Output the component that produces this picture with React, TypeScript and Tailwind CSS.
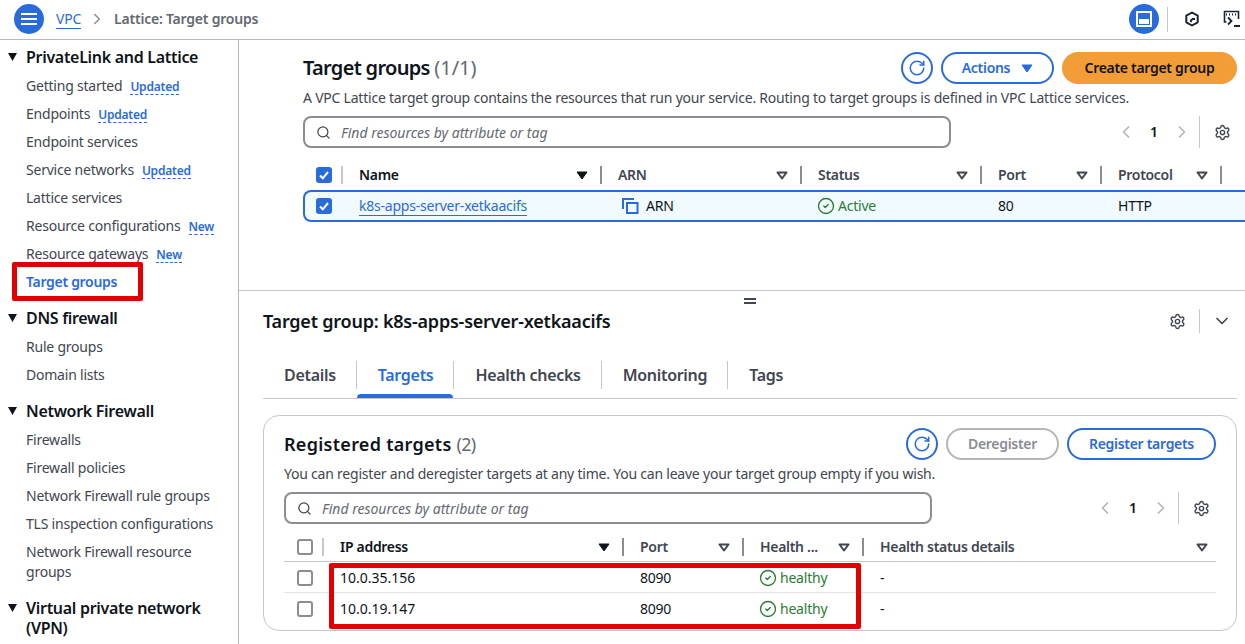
import { ChevronDown, ChevronLeft, ChevronRight, CircleCheck, RotateCw, Search, Settings } from "lucide-react";

const navSections = [
  {
    title: "PrivateLink and Lattice",
    items: [
      { label: "Getting started", badge: "Updated" },
      { label: "Endpoints", badge: "Updated" },
      { label: "Endpoint services" },
      { label: "Service networks", badge: "Updated" },
      { label: "Lattice services" },
      { label: "Resource configurations", badge: "New" },
      { label: "Resource gateways", badge: "New" },
      { label: "Target groups", active: true },
    ],
  },
  { title: "DNS firewall", items: [{ label: "Rule groups" }, { label: "Domain lists" }] },
  {
    title: "Network Firewall",
    items: [
      { label: "Firewalls" },
      { label: "Firewall policies" },
      { label: "Network Firewall rule groups" },
      { label: "TLS inspection configurations" },
      { label: "Network Firewall resource groups" },
    ],
  },
  { title: "Virtual private network (VPN)", items: [] },
];

function SortIcon({ active }: { active?: boolean }) {
  return (
    <svg width="12" height="9" viewBox="0 0 12 9" className="shrink-0">
      {active ? (
        <path d="M1 1h10L6 8z" fill="#0f141a" stroke="#0f141a" strokeWidth="1" strokeLinejoin="round" />
      ) : (
        <path d="M1.5 1.5h9L6 7.5z" fill="none" stroke="#424650" strokeWidth="2" strokeLinejoin="round" />
      )}
    </svg>
  );
}

function Checkbox({ checked }: { checked?: boolean }) {
  if (checked) {
    return (
      <span className="flex h-4 w-4 shrink-0 items-center justify-center rounded-[3px] bg-[#2a6bdc]">
        <svg width="12" height="12" viewBox="0 0 12 12" fill="none" stroke="white" strokeWidth="2">
          <path d="M2 6.5l2.8 2.8L10 3" />
        </svg>
      </span>
    );
  }
  return <span className="block h-4 w-4 shrink-0 rounded-[3px] border-2 border-[#8c8c94] bg-white" />;
}

function HeaderCell({ label, active, last }: { label: string; active?: boolean; last?: boolean }) {
  return (
    <div className={`flex h-[18px] items-center justify-between pl-[16px] ${last ? "pr-[8px]" : "border-r-2 border-[#8c8c94] pr-[12px]"}`}>
      <span className={`text-sm font-semibold tracking-[-0.3px] ${active ? "text-[#0f141a]" : "text-[#424650]"}`}>{label}</span>
      <SortIcon active={active} />
    </div>
  );
}

function IconButton() {
  return (
    <button className="flex h-8 w-8 items-center justify-center rounded-full border-2 border-[#2a6bdc] text-[#2a6bdc]">
      <RotateCw size={18} strokeWidth={2} />
    </button>
  );
}

function Pagination() {
  return (
    <div className="mr-[6px] flex h-8 items-center">
      <ChevronLeft size={20} strokeWidth={2} className="text-[#b4b4bb]" />
      <span className="w-[36px] text-center text-sm font-semibold text-[#0f141a]">1</span>
      <ChevronRight size={20} strokeWidth={2} className="text-[#b4b4bb]" />
      <span className="ml-[7px] h-8 w-px bg-[#c6c6cd]" />
      <Settings size={17} strokeWidth={2} className="ml-[14px] text-[#424650]" />
    </div>
  );
}

function SearchBox({ width }: { width: string }) {
  return (
    <div className={`flex h-8 items-center gap-[10px] rounded-lg border-2 border-[#8c8c94] pl-[11px] ${width}`}>
      <Search size={15} strokeWidth={2} className="text-[#424650]" />
      <span className="pt-[1px] text-sm tracking-normal italic text-[#656871]">Find resources by attribute or tag</span>
    </div>
  );
}

function Healthy({ label }: { label: string }) {
  return (
    <span className="flex items-center gap-[3px] text-sm text-[#2a7d33]">
      <CircleCheck size={18} strokeWidth={1.8} className="-ml-[1px]" />
      {label}
    </span>
  );
}

function Sidebar() {
  return (
    <aside className="h-full w-[239px] shrink-0 overflow-hidden border-r border-[#b6b6bb] pt-[2px]">
      {navSections.map((section) => (
        <div key={section.title} className="mb-[7px]">
          <div className="flex py-[5px] pr-[16px]">
            <svg width="26" height="20" viewBox="0 0 26 20" className="shrink-0">
              <path d="M8 6h9l-4.5 8z" fill="#0f141a" />
            </svg>
            <span className="text-base leading-[20px] font-semibold tracking-[-0.3px] text-[#0f141a]">{section.title}</span>
          </div>
          {section.items.map((item) => (
            <div key={item.label} className="flex min-h-[28px] items-center py-[4px] pr-[8px] pl-[26px]">
              <span className={`text-sm leading-[20px] ${item.active ? "font-semibold tracking-[-0.3px] text-[#2a6bdc]" : "text-[#424650]"}`}>
                {item.label}
              </span>
              {item.badge && (
                <span className="mt-[2px] ml-[8px] border-b border-dashed border-[#2a6bdc] text-xs leading-[14px] font-semibold text-[#2a6bdc]">
                  {item.badge}
                </span>
              )}
            </div>
          ))}
        </div>
      ))}
    </aside>
  );
}

function TopBar() {
  return (
    <header className="flex h-10 items-center border-b border-[#b6b6bb] pr-[4px] pb-[1px] pl-[14px]">
      <span className="flex h-[30px] w-[30px] items-center justify-center rounded-full bg-[#2a6bdc]">
        <svg width="16" height="14" viewBox="0 0 16 14" fill="white">
          <rect y="1" width="16" height="2" />
          <rect y="6" width="16" height="2" />
          <rect y="11" width="16" height="2" />
        </svg>
      </span>
      <span className="ml-[12px] border-b border-[#2a6bdc] text-sm leading-[18px] text-[#2a6bdc]">VPC</span>
      <ChevronRight size={18} strokeWidth={2} className="ml-[7px] text-[#8c8c94]" />
      <span className="ml-[8px] text-sm font-semibold text-[#656871]">Lattice: Target groups</span>
      <span className="ml-auto flex h-[30px] w-[30px] items-center justify-center rounded-full bg-[#2a6bdc]">
        <svg width="16" height="16" viewBox="0 0 16 16">
          <rect x="1" y="1" width="14" height="14" fill="none" stroke="white" strokeWidth="2" />
          <rect x="3" y="8" width="10" height="5" fill="white" />
        </svg>
      </span>
      <span className="ml-[8px] h-[25px] w-px bg-[#c6c6cd]" />
      <svg width="16" height="16" viewBox="0 0 16 16" fill="none" stroke="#1b232d" strokeWidth="2" className="ml-[16px]">
        <path d="M8 1.5l5.7 3.2v6.6L8 14.5l-5.7-3.2V4.7z" strokeLinejoin="round" />
        <path d="M8 8h3M8 8l-1.5 3" />
      </svg>
      <svg width="18" height="18" viewBox="0 0 18 18" fill="none" stroke="#1b232d" strokeWidth="1.6" className="ml-[23px]">
        <path d="M3.5 12H1.5V1.5h14V9" />
        <path d="M3 4.5h1M6 4.5h1M9 4.5h1M12 4.5h1" strokeWidth="2" />
        <path d="M5 7.5l3.5 3.5L5 14.5M11 16h6" strokeWidth="1.8" />
      </svg>
    </header>
  );
}

function TargetGroupsPanel() {
  return (
    <section className="h-[250px] shrink-0 overflow-hidden pt-[12px] pr-[8px] pl-[64px]">
      <div className="flex h-8 items-center">
        <h1 className="text-xl font-semibold tracking-[-0.7px] text-[#0f141a]">
          Target groups <span className="font-normal tracking-normal text-[#656871]">(1/1)</span>
        </h1>
        <div className="ml-auto flex items-center gap-2">
          <IconButton />
          <button className="flex h-8 w-[113px] items-center justify-center gap-[11px] rounded-full border-2 border-[#2a6bdc] text-sm font-semibold tracking-[-0.3px] text-[#2a6bdc]">
            Actions
            <svg width="12" height="9" viewBox="0 0 12 9">
              <path d="M1 1h10L6 8z" fill="#2a6bdc" stroke="#2a6bdc" strokeLinejoin="round" />
            </svg>
          </button>
          <button className="h-8 w-[175px] rounded-full bg-[#f29d38] text-sm font-semibold tracking-[-0.3px] text-[#0f141a]">
            Create target group
          </button>
        </div>
      </div>
      <p className="mt-[4px] text-sm leading-[20px] whitespace-nowrap text-[#424650]">
        A VPC Lattice target group contains the resources that run your service. Routing to target groups is defined in VPC Lattice services.
      </p>
      <div className="mt-[8px] flex items-center justify-between">
        <SearchBox width="w-[648px]" />
        <Pagination />
      </div>
      <div className="mt-[18px] grid w-[960px] grid-cols-[40px_259px_200px_180px_120px_120px_1fr] items-center">
        <div className="flex h-[18px] items-center border-r-2 border-[#c6c6cd] pl-[13px]">
          <Checkbox checked />
        </div>
        <HeaderCell label="Name" active />
        <HeaderCell label="ARN" />
        <HeaderCell label="Status" />
        <HeaderCell label="Port" />
        <HeaderCell label="Protocol" />
      </div>
      <div className="mt-[6px] grid h-8 w-[960px] grid-cols-[38px_259px_200px_180px_120px_120px_1fr] items-center rounded-l-lg border-y-2 border-l-2 border-[#2a6bdc] bg-[#f1faff] text-sm text-[#0f141a]">
        <div className="pl-[11px]">
          <Checkbox checked />
        </div>
        <div className="pl-[16px]">
          <span className="border-b border-[#2a6bdc] leading-[18px] text-[#2a6bdc]">k8s-apps-server-xetkaacifs</span>
        </div>
        <div className="flex items-center gap-[7px] pl-[20px]">
          <svg width="17" height="16" viewBox="0 0 17 16" fill="none" stroke="#2a6bdc" strokeWidth="2">
            <path d="M1 11V1h11" />
            <rect x="5" y="5" width="10.5" height="10" />
          </svg>
          ARN
        </div>
        <div className="pl-[16px]">
          <Healthy label="Active" />
        </div>
        <div className="pl-[16px]">80</div>
        <div className="pl-[16px]">HTTP</div>
      </div>
    </section>
  );
}

function RegisteredTargets() {
  const rows = ["10.0.35.156", "10.0.19.147"];
  return (
    <div className="mt-[16px] h-[216px] rounded-2xl border border-[#c6c6cd] px-[20px] pt-[12px]">
      <div className="flex h-8 items-center">
        <h2 className="text-lg font-semibold tracking-[0.28px] text-[#0f141a]">
          Registered targets <span className="font-normal tracking-[-0.8px] text-[#656871]">(2)</span>
        </h2>
        <div className="ml-auto flex items-center gap-2">
          <IconButton />
          <button className="h-8 w-[113px] rounded-full border-2 border-[#b4b4bb] text-sm font-semibold tracking-[-0.3px] text-[#8c8c94]">
            Deregister
          </button>
          <button className="h-8 w-[149px] rounded-full border-2 border-[#2a6bdc] text-sm font-semibold tracking-[-0.3px] text-[#2a6bdc]">
            Register targets
          </button>
        </div>
      </div>
      <p className="mt-[4px] text-sm leading-[20px] text-[#424650]">
        You can register and deregister targets at any time. You can leave your target group empty if you wish.
      </p>
      <div className="mt-[8px] flex items-center justify-between">
        <SearchBox width="w-[648px]" />
        <Pagination />
      </div>
      <div className="mt-[7px] grid h-[31px] grid-cols-[40px_300px_120px_120px_1fr] items-center border-b border-[#c6c6cd] pt-[2px]">
        <div className="flex h-[18px] items-center border-r-2 border-[#c6c6cd] pl-[13px]">
          <Checkbox />
        </div>
        <HeaderCell label="IP address" active />
        <HeaderCell label="Port" />
        <HeaderCell label="Health ..." />
        <HeaderCell label="Health status details" last />
      </div>
      {rows.map((ip, i) => (
        <div
          key={ip}
          className={`grid h-[31px] grid-cols-[40px_300px_120px_120px_1fr] items-center text-sm text-[#0f141a] ${i === 0 ? "border-b border-[#e4e4e8] pt-[1px]" : ""}`}
        >
          <div className="pl-[13px]">
            <Checkbox />
          </div>
          <div className="pl-[16px] tracking-normal">{ip}</div>
          <div className="pl-[16px]">8090</div>
          <div className="pl-[16px]">
            <Healthy label="healthy" />
          </div>
          <div className="pl-[16px]">-</div>
        </div>
      ))}
    </div>
  );
}

function DetailPanel() {
  const tabs = ["Details", "Targets", "Health checks", "Monitoring", "Tags"];
  return (
    <section className="relative flex-1 overflow-hidden border-t border-[#c6c6cd] pr-[8px] pl-[24px]">
      <div className="absolute top-[7px] left-[505px] h-[6px] w-[12px] border-y-2 border-[#424650]" />
      <div className="mt-[16px] flex h-[28px] items-center">
        <h2 className="text-lg font-semibold tracking-[-0.22px] text-[#0f141a]">Target group: k8s-apps-server-xetkaacifs</h2>
        <div className="ml-auto flex items-center">
          <Settings size={17} strokeWidth={2} className="text-[#424650]" />
          <span className="mr-[12px] ml-[13px] h-[24px] w-px bg-[#c6c6cd]" />
          <ChevronDown size={20} strokeWidth={2} className="mr-[5px] text-[#424650]" />
        </div>
      </div>
      <div className="mt-[26px] flex h-[38px] items-start border-b border-[#c6c6cd]">
        {tabs.map((tab, i) => (
          <div
            key={tab}
            className={`relative flex h-[28px] items-center pr-[20px] pl-[21px] text-base font-semibold tracking-[-0.3px] ${i === 1 ? "text-[#2a6bdc]" : "text-[#424650]"} ${i < 4 ? "border-r border-[#c6c6cd]" : ""}`}
          >
            {tab}
            {i === 1 && <span className="absolute top-[33px] right-0 left-0 h-[4px] rounded-t-sm bg-[#2a6bdc]" />}
          </div>
        ))}
      </div>
      <RegisteredTargets />
    </section>
  );
}

export default function App() {
  return (
    <div className="relative flex h-[644px] w-full flex-col overflow-hidden bg-white tracking-[-0.22px] [font-family:'Noto_Sans',sans-serif]">
      <TopBar />
      <div className="flex min-h-0 flex-1">
        <Sidebar />
        <main className="flex min-w-0 flex-1 flex-col">
          <TargetGroupsPanel />
          <DetailPanel />
        </main>
      </div>
      {/* red annotation boxes */}
      <div className="pointer-events-none absolute top-[262px] left-[12px] h-[39px] w-[131px] rounded-[2px] border-[5px] border-[#e30000]" />
      <div className="pointer-events-none absolute top-[563px] left-[329px] h-[66px] w-[532px] rounded-[2px] border-[5px] border-[#e30000]" />
    </div>
  );
}
